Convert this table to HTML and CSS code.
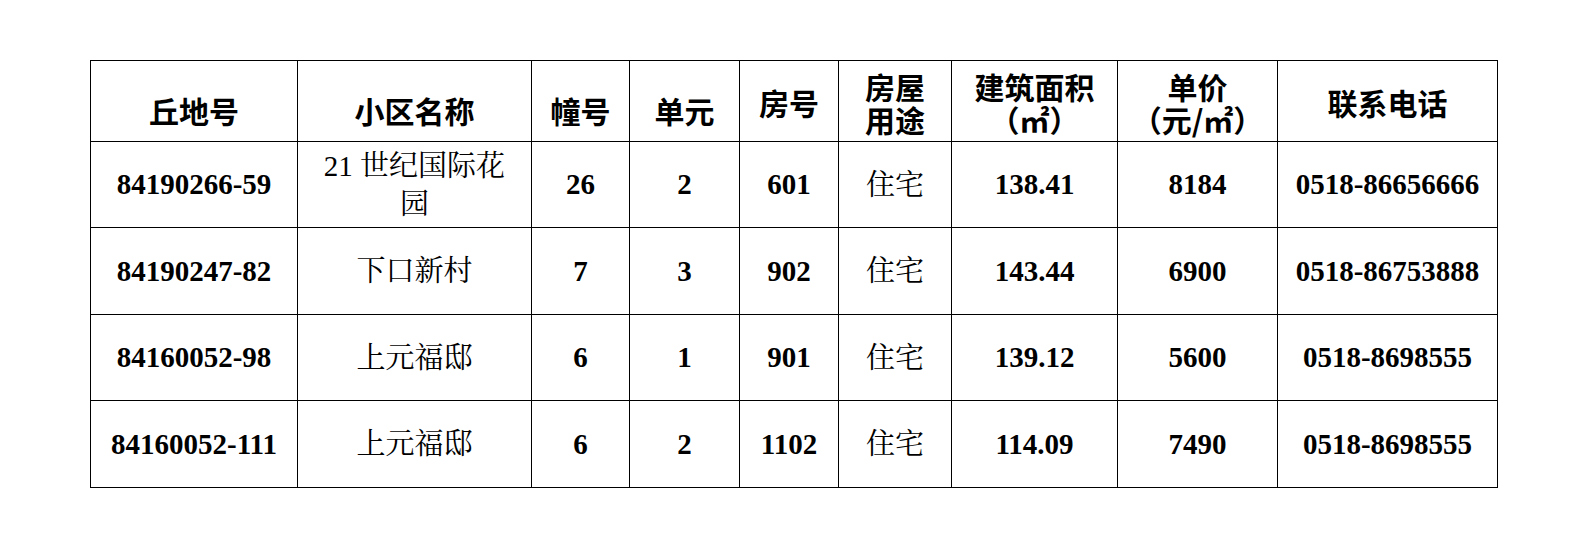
FILE: index.html
```html
<!DOCTYPE html>
<html lang="zh-CN">
<head>
<meta charset="utf-8">
<title>房源信息表</title>
<link rel="stylesheet" href="styles.css">
</head>
<body>
<table class="grid">
  <colgroup>
    <col class="c1"><col class="c2"><col class="c3"><col class="c4"><col class="c5"><col class="c6"><col class="c7"><col class="c8"><col class="c9">
  </colgroup>
  <thead>
    <tr class="head">
      <th class="low">丘地号</th>
      <th class="low">小区名称</th>
      <th class="low">幢号</th>
      <th class="low">单元</th>
      <th class="mid">房号</th>
      <th class="two"><span class="ln">房屋</span><span class="ln">用途</span></th>
      <th class="two"><span class="ln">建筑面积</span><span class="ln">（㎡）</span></th>
      <th class="two"><span class="ln">单价</span><span class="ln">（元/㎡）</span></th>
      <th class="mid">联系电话</th>
    </tr>
  </thead>
  <tbody>
    <tr class="r1">
      <td class="num">84190266-59</td>
      <td class="txt name">21 世纪国际花园</td>
      <td class="num">26</td>
      <td class="num">2</td>
      <td class="num">601</td>
      <td class="txt">住宅</td>
      <td class="num">138.41</td>
      <td class="num">8184</td>
      <td class="num">0518-86656666</td>
    </tr>
    <tr class="r2">
      <td class="num">84190247-82</td>
      <td class="txt">下口新村</td>
      <td class="num">7</td>
      <td class="num">3</td>
      <td class="num">902</td>
      <td class="txt">住宅</td>
      <td class="num">143.44</td>
      <td class="num">6900</td>
      <td class="num">0518-86753888</td>
    </tr>
    <tr class="r1">
      <td class="num">84160052-98</td>
      <td class="txt">上元福邸</td>
      <td class="num">6</td>
      <td class="num">1</td>
      <td class="num">901</td>
      <td class="txt">住宅</td>
      <td class="num">139.12</td>
      <td class="num">5600</td>
      <td class="num">0518-8698555</td>
    </tr>
    <tr class="r2">
      <td class="num">84160052-111</td>
      <td class="txt">上元福邸</td>
      <td class="num">6</td>
      <td class="num">2</td>
      <td class="num">1102</td>
      <td class="txt">住宅</td>
      <td class="num">114.09</td>
      <td class="num">7490</td>
      <td class="num">0518-8698555</td>
    </tr>
  </tbody>
</table>
</body>
</html>
```
FILE: styles.css
```css
html, body {
  margin: 0;
  padding: 0;
  background: #ffffff;
}

body {
  padding: 60px 0 0 90px;
  color: #000000;
}

.grid {
  border-collapse: collapse;
  table-layout: fixed;
  width: 1408px;
}

.c1 { width: 207px; }
.c2 { width: 234px; }
.c3 { width: 98px; }
.c4 { width: 110px; }
.c5 { width: 99px; }
.c6 { width: 113px; }
.c7 { width: 166px; }
.c8 { width: 160px; }
.c9 { width: 220px; }

.grid th,
.grid td {
  border: 1px solid #000000;
  padding: 0 15px;
  text-align: center;
  vertical-align: middle;
  overflow: hidden;
}

.head th {
  height: 81px;
  box-sizing: border-box;
  font-family: "Noto Sans CJK SC", "Noto Sans", sans-serif;
  font-weight: 700;
  font-size: 30px;
  line-height: 35px;
  white-space: nowrap;
  padding: 0;
}

.head th.low {
  padding-top: 19px;
}

.head th.mid {
  padding-top: 2px;
}

.head th.two {
  padding-top: 2px;
}

.ln {
  display: block;
  line-height: 30px;
  height: 30px;
  margin: 3px 0;
}

.r1 td { height: 85px; }
.r2 td { height: 86px; }

.num {
  font-family: "Liberation Serif", "Times New Roman", serif;
  font-weight: 700;
  font-size: 29px;
  white-space: nowrap;
}

.txt {
  font-family: "Liberation Serif", "Noto Serif CJK SC", "Noto Sans CJK SC", serif;
  font-weight: 400;
  font-size: 29px;
  line-height: 38px;
}
```
